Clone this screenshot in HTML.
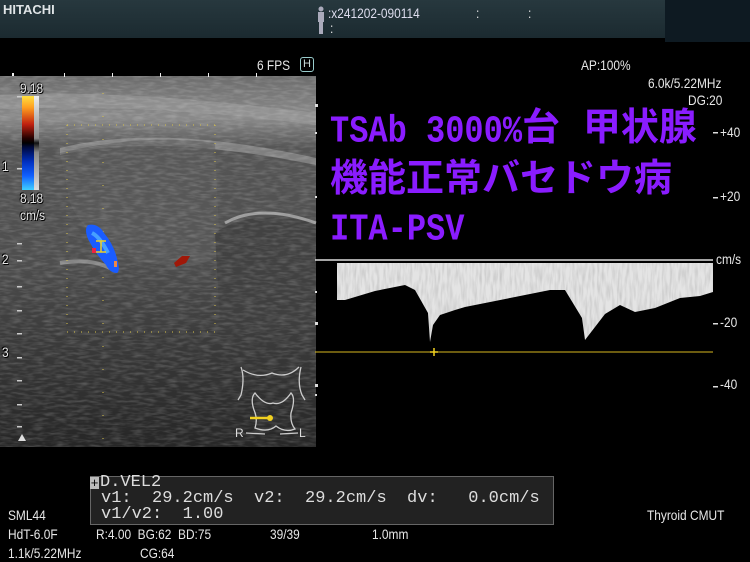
<!DOCTYPE html>
<html><head><meta charset="utf-8"><style>
body{margin:0;width:750px;height:562px;background:#000;position:relative;overflow:hidden;font-family:"Liberation Sans",sans-serif;color:#e6e6e6}
.a{position:absolute;white-space:pre}
.n{font-size:14px;transform:scaleX(.85);transform-origin:left}
.m{font-family:"Liberation Mono",monospace;font-size:17px;line-height:16px;color:#ddd}
.p{position:absolute;color:#8a1cff;font-family:"Liberation Mono","Noto Sans CJK JP",monospace;font-weight:bold;font-size:38px;line-height:40px;white-space:pre}
.p b{font-weight:bold;font-size:32px;display:inline-block;transform:scaleY(1.2)}
.sh{text-shadow:0 0 2px #000,1px 1px 0 #000,-1px -1px 0 #000}
</style></head><body>
<div class="a" style="left:0;top:0;width:665px;height:38px;background:linear-gradient(#27383e,#1b2a30)"></div>
<div class="a" style="left:665px;top:0;width:85px;height:42px;background:#0e1a22"></div>
<div class="a" style="left:3px;top:2px;font-weight:bold;font-size:13px;color:#dfe4e6">HITACHI</div>
<svg class="a" style="left:316px;top:6px" width="10" height="28"><circle cx="5" cy="3" r="2.5" fill="#aab"/><rect x="2" y="6" width="6" height="10" fill="#aab"/><rect x="3" y="15" width="4" height="13" fill="#aab"/></svg>
<div class="a n" style="left:328px;top:5px;color:#dde">:x241202-090114</div>
<div class="a n" style="left:476px;top:5px">:</div><div class="a n" style="left:528px;top:5px">:</div>
<div class="a n" style="left:330px;top:20px">:</div>

<div class="a n" style="left:257px;top:57px">6 FPS</div>
<div class="a" style="left:300px;top:57px;width:12px;height:13px;border:1px solid #9cc;border-radius:3px;font-size:11px;text-align:center;line-height:13px;color:#cdd">H</div>
<div class="a n" style="left:581px;top:57px">AP:100%</div>
<div class="a n" style="left:648px;top:75px">6.0k/5.22MHz</div>
<div class="a n" style="left:688px;top:92px">DG:20</div>

<svg class="a" style="left:0;top:73px" width="318" height="374">
<defs>
<filter id="t" x="0" y="0" width="100%" height="100%"><feTurbulence type="fractalNoise" baseFrequency="0.09 0.4" numOctaves="2" seed="3"/><feColorMatrix type="matrix" values="0 0 0 0 1 0 0 0 0 1 0 0 0 0 1 0.9 0 0 0 -0.35"/></filter>
<linearGradient id="g" x1="0" y1="0" x2="0" y2="1"><stop offset="0" stop-color="#6a6a6a"/><stop offset=".12" stop-color="#8a8a8a"/><stop offset=".2" stop-color="#555"/><stop offset=".5" stop-color="#4e4e4e"/><stop offset=".72" stop-color="#3a3a3a"/><stop offset="1" stop-color="#262626"/></linearGradient>
</defs>
<rect width="316" height="374" fill="url(#g)"/>
<path d="M0 22 Q120 15 316 40 L316 52 Q150 30 0 36Z" fill="#9a9a9a" opacity=".6"/>
<path d="M60 75 Q160 50 316 85 L316 92 Q160 60 60 82Z" fill="#aaa" opacity=".5"/>
<path d="M60 80 Q140 60 215 70 L220 180 Q200 200 150 190 Q90 175 70 130Z" fill="#5c5c5c" opacity=".6"/>
<path d="M215 160 Q250 135 316 150 L316 250 L220 250Z" fill="#3e3e3e" opacity=".8"/>
<path d="M225 150 Q260 130 316 150" stroke="#bbb" stroke-width="3" fill="none" opacity=".7"/>
<path d="M60 190 Q90 185 110 195" stroke="#aaa" stroke-width="4" fill="none" opacity=".6"/>
<rect width="316" height="374" filter="url(#t)" opacity=".4"/>
<rect x="0" y="0" width="316" height="3" fill="#000"/>
<g fill="#eee"><rect x="12" y="0" width="2" height="3"/><rect x="64" y="0" width="1" height="4"/><rect x="112" y="0" width="1" height="4"/><rect x="160" y="0" width="1" height="4"/><rect x="208" y="0" width="1" height="4"/><rect x="256" y="0" width="1" height="4"/></g>
<g fill="#d8c24a"><path d="M67 52h148" stroke="#d8c24a" stroke-dasharray="1 6"/><path d="M67 259h148" stroke="#d8c24a" stroke-dasharray="1 6"/><path d="M67 52v207" stroke="#d8c24a" stroke-dasharray="1 8"/><path d="M215 52v207" stroke="#d8c24a" stroke-dasharray="1 8"/><path d="M103 20v350" stroke="#d8c24a" stroke-dasharray="1 22"/></g>
<g fill="#ccc"><rect x="17" y="23" width="5" height="1.5"/><rect x="17" y="95" width="5" height="1.5"/><rect x="17" y="170" width="5" height="1.5"/><rect x="17" y="187" width="5" height="1.5"/><rect x="17" y="213" width="5" height="1.5"/><rect x="17" y="237" width="5" height="1.5"/><rect x="17" y="260" width="5" height="1.5"/><rect x="17" y="284" width="5" height="1.5"/><rect x="17" y="307" width="5" height="1.5"/><rect x="17" y="331" width="5" height="1.5"/><rect x="17" y="353" width="5" height="1.5"/></g>
<g transform="translate(0,68)">
<path d="M88 84 Q98 82 104 92 Q115 105 118 122 Q120 130 117 132 Q110 132 106 124 Q95 112 88 98 Q84 88 88 84Z" fill="#1a5cff"/>
<path d="M92 92 Q100 96 108 112" stroke="#46a0ff" stroke-width="4" fill="none"/>
<rect x="92" y="107" width="4" height="5" fill="#e24"/><rect x="114" y="120" width="3" height="6" fill="#e84"/>
<path d="M96 100h10M101 100v11M96 111h10" stroke="#f0d020" stroke-width="1.5" fill="none"/>
</g>
<path d="M174 190 L182 183 L190 183 L186 190 L176 194Z" fill="#a01808"/>
<g stroke="#ccc" stroke-width="1.3" fill="none"><path d="M241 294 Q245 305 241 322 L238 327"/><path d="M243 297 Q258 306 272 300 Q287 306 299 294"/><path d="M301 294 Q297 310 302 322 L305 327"/><path d="M254 337 Q250 325 255 320 Q265 333 273 330 Q282 333 291 320 Q296 325 291 340 Q290 350 295 356 Q285 360 276 353 Q268 360 255 355 Q258 346 254 337Z"/><path d="M246 360 L265 361"/><path d="M280 361 L298 360"/></g>
<path d="M250 345h18" stroke="#f0d020" stroke-width="2.5"/><circle cx="270" cy="345" r="3" fill="#f0d020"/>
<text x="235" y="364" fill="#ddd" font-size="12" font-family="Liberation Sans">R</text><text x="299" y="364" fill="#ddd" font-size="12" font-family="Liberation Sans">L</text>
<path d="M18 368l4-7 4 7z" fill="#ddd"/>
</svg>
<div class="a" style="left:22px;top:96px;width:12px;height:94px;background:linear-gradient(#ffe040,#ffa020 12%,#c02010 30%,#200 45%,#000 50%,#000a40 55%,#0030c0 70%,#1060ff 85%,#40d0ff)"></div>
<div class="a" style="left:34px;top:96px;width:5px;height:94px;background:linear-gradient(#eee,#888 45%,#111 50%,#888 60%,#ddd)"></div>
<div class="a n sh" style="left:20px;top:80px">9.18</div>
<div class="a n sh" style="left:20px;top:190px">8.18</div>
<div class="a n sh" style="left:20px;top:207px">cm/s</div>
<div class="a n sh" style="left:2px;top:158px">1</div>
<div class="a n sh" style="left:2px;top:251px">2</div>
<div class="a n sh" style="left:2px;top:344px">3</div>

<svg class="a" style="left:315px;top:100px" width="435" height="300">
<defs><filter id="w" x="0" y="0" width="100%" height="100%"><feTurbulence type="fractalNoise" baseFrequency="0.4 0.06" numOctaves="2" seed="5"/><feColorMatrix type="matrix" values="0 0 0 0 0 0 0 0 0 0 0 0 0 0 0 0.8 0 0 0 -0.3"/></filter>
<clipPath id="c"><path d="M22 163 L398 163 L398 192 L385 196 L365 198 L340 208 L320 212 L305 205 L290 214 L270 240 L267 218 L250 190 L235 190 L200 197 L150 207 L140 210 L125 215 L118 225 L115 242 L113 213 L100 190 L90 185 L60 191 L30 200 L22 200Z"/></clipPath></defs>
<path d="M0 160h398" stroke="#ddd" stroke-width="1.5"/>
<g clip-path="url(#c)"><rect width="435" height="300" fill="#e4e4e4"/><rect width="435" height="300" filter="url(#w)" opacity=".3"/></g>
<path d="M0 252h398" stroke="#d8b820" stroke-width="1"/><path d="M119 248v8M115 252h8" stroke="#f0d020" stroke-width="1.5"/>
<g fill="#ddd"><rect x="0" y="4" width="3" height="3"/><rect x="0" y="32" width="2" height="2"/><rect x="0" y="96" width="2" height="2"/><rect x="0" y="191" width="2" height="2"/><rect x="0" y="222" width="3" height="3"/><rect x="0" y="284" width="3" height="3"/><rect x="0" y="294" width="2" height="2"/>
<rect x="398" y="32" width="5" height="1.5"/><rect x="398" y="97" width="5" height="1.5"/><rect x="398" y="223" width="5" height="1.5"/><rect x="398" y="286" width="5" height="1.5"/></g>
</svg>
<div class="a n" style="left:720px;top:124px">+40</div>
<div class="a n" style="left:720px;top:188px">+20</div>
<div class="a n" style="left:716px;top:251px">cm/s</div>
<div class="a n" style="left:720px;top:314px">-20</div>
<div class="a n" style="left:720px;top:376px">-40</div>

<div class="p" style="left:330px;top:111px"><b>TSAb 3000%</b>台 甲状腺</div>
<div class="p" style="left:330px;top:162px">機能正常バセドウ病</div>
<div class="p" style="left:330px;top:209px"><b>ITA-PSV</b></div>

<div class="a" style="left:90px;top:476px;width:462px;height:47px;background:#222;border:1px solid #666"></div>
<div class="a" style="left:90px;top:477px;width:9px;height:12px;background:#bbb;color:#000;font-size:13px;line-height:11px;text-align:center">+</div>
<div class="a m" style="left:100px;top:475px">D.VEL2</div>
<div class="a m" style="left:101px;top:491px">v1:  29.2cm/s  v2:  29.2cm/s  dv:   0.0cm/s</div>
<div class="a m" style="left:101px;top:507px">v1/v2:  1.00</div>
<div class="a n" style="left:8px;top:507px">SML44</div>
<div class="a n" style="left:647px;top:507px">Thyroid CMUT</div>
<div class="a n" style="left:8px;top:526px">HdT-6.0F</div>
<div class="a n" style="left:96px;top:526px">R:4.00  BG:62  BD:75</div>
<div class="a n" style="left:270px;top:526px">39/39</div>
<div class="a n" style="left:372px;top:526px">1.0mm</div>
<div class="a n" style="left:8px;top:545px">1.1k/5.22MHz</div>
<div class="a n" style="left:140px;top:545px">CG:64</div>
</body></html>
